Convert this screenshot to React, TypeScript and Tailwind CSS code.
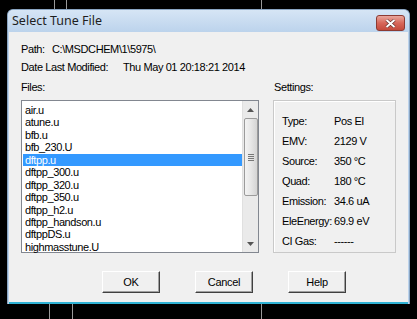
import React from 'react'

const files = [
  'air.u',
  'atune.u',
  'bfb.u',
  'bfb_230.U',
  'dftpp.u',
  'dftpp_300.u',
  'dftpp_320.u',
  'dftpp_350.u',
  'dftpp_h2.u',
  'dftpp_handson.u',
  'dftppDS.u',
  'highmasstune.U',
]

const settings: [string, string][] = [
  ['Type:', 'Pos EI'],
  ['EMV:', '2129 V'],
  ['Source:', '350 °C'],
  ['Quad:', '180 °C'],
  ['Emission:', '34.6 uA'],
  ['EleEnergy:', '69.9 eV'],
  ['CI Gas:', '------'],
]

function Button({ label }: { label: string }) {
  return (
    <button className="w-[58px] h-[22px] bg-[#f0f0f0] border border-t-white border-l-white border-r-[#404040] border-b-[#404040] shadow-[inset_-1px_-1px_0_#a0a0a0] text-[11px] tracking-[-0.3px] text-black">
      {label}
    </button>
  )
}

export default function App() {
  return (
    <div
      className="relative w-[417px] h-[319px] bg-black overflow-hidden pt-[9px] pl-[7px]"
      style={{ fontFamily: '"Liberation Sans", Arial, sans-serif' }}
    >
      {/* stray lines behind the window */}
      <div className="absolute left-[54px] top-0 w-px h-[10px] bg-[#9a9a9a]" />
      <div className="absolute left-[66px] top-0 w-px h-[10px] bg-[#9a9a9a]" />
      <div className="absolute left-[261px] top-0 w-px h-[10px] bg-[#9a9a9a]" />
      <div className="absolute left-[49px] bottom-0 w-px h-[16px] bg-[#9a9a9a]" />
      <div className="absolute left-[72px] bottom-0 w-px h-[16px] bg-[#9a9a9a]" />
      <div className="absolute left-[261px] bottom-0 w-px h-[16px] bg-[#9a9a9a]" />

      <div className="relative w-[403px] h-[295px] rounded-t-[6px] bg-[#bcd3ec] border border-[#8aa5c2] border-b-0 flex flex-col">
        {/* title bar */}
        <div className="h-[22px] flex items-center justify-between pl-[4px] pr-[4px] rounded-t-[5px] bg-gradient-to-b from-[#d6e5f5] to-[#bcd3ec]">
          <span
            className="text-[12.5px] text-[#1e1e1e] mt-[1px]"
            style={{ fontFamily: '"Noto Sans", "Open Sans", sans-serif' }}
          >
            Select Tune File
          </span>
          <div className="w-[29px] h-[16px] mt-[4px] rounded-[3px] border border-[#8c3a32] bg-gradient-to-b from-[#e8a69c] via-[#d7675a] to-[#c44a3c] flex items-center justify-center">
            <svg width="11" height="9" viewBox="0 0 11 9">
              <path d="M1.5 1 L9.5 8 M9.5 1 L1.5 8" stroke="#5a2a26" strokeWidth="3.2" />
              <path d="M1.5 1 L9.5 8 M9.5 1 L1.5 8" stroke="#ffffff" strokeWidth="2" />
            </svg>
          </div>
        </div>

        {/* client area */}
        <div className="flex-1 mx-[1px] bg-[#f0f0f0] border-b-2 border-[#2fb2d4] pl-[12px] text-[11px] tracking-[-0.4px] text-black">
          <div className="h-[18px] mt-[8px] flex items-center">
            <span className="w-[31px]">Path:</span>
            <span>C:\MSDCHEM\1\5975\</span>
          </div>
          <div className="h-[18px] flex items-center">
            <span className="w-[102px]">Date Last Modified:</span>
            <span>Thu May 01 20:18:21 2014</span>
          </div>

          <div className="flex gap-[14px] mt-[2px]">
            {/* files */}
            <div className="w-[238px]">
              <div className="h-[18px] flex items-center">Files:</div>
              <div className="mt-[4px] h-[153px] bg-white border border-[#828790] flex">
                <div className="flex-1 pt-[3px] pl-[1px]">
                  {files.map((f) => (
                    <div
                      key={f}
                      className={
                        f === 'dftpp.u'
                          ? 'h-[12.45px] leading-[12.45px] pl-[2px] bg-[#3399ff] text-white'
                          : 'h-[12.45px] leading-[12.45px] pl-[2px]'
                      }
                    >
                      {f}
                    </div>
                  ))}
                </div>
                {/* scrollbar */}
                <div className="w-[16px] bg-[#eaeaea] border-l border-[#e0e0e0] flex flex-col items-center">
                  <div className="h-[17px] flex items-center justify-center">
                    <svg width="7" height="4" viewBox="0 0 7 4">
                      <path d="M0 4 L3.5 0 L7 4 Z" fill="#555" />
                    </svg>
                  </div>
                  <div className="w-[14px] h-[78px] rounded-[2px] border border-[#9b9b9b] bg-gradient-to-r from-[#f3f3f3] via-[#e6e6e6] to-[#d4d4d4] flex items-center justify-center">
                    <div className="flex flex-col gap-[1px]">
                      <div className="w-[6px] h-px bg-[#777]" />
                      <div className="w-[6px] h-px bg-[#777]" />
                      <div className="w-[6px] h-px bg-[#777]" />
                      <div className="w-[6px] h-px bg-[#777]" />
                    </div>
                  </div>
                  <div className="flex-1" />
                  <div className="h-[17px] flex items-center justify-center">
                    <svg width="7" height="4" viewBox="0 0 7 4">
                      <path d="M0 0 L3.5 4 L7 0 Z" fill="#555" />
                    </svg>
                  </div>
                </div>
              </div>
            </div>

            {/* settings */}
            <div className="w-[123px]">
              <div className="h-[18px] flex items-center pl-[1px]">Settings:</div>
              <div className="mt-[4px] h-[153px] border border-[#c9c9c9] shadow-[inset_1px_1px_0_#ffffff] pt-[10px] pl-[8px]">
                {settings.map(([k, v]) => (
                  <div key={k} className="h-[20px] flex items-center">
                    <span className="w-[52px]">{k}</span>
                    <span>{v}</span>
                  </div>
                ))}
              </div>
            </div>
          </div>

          <div className="flex gap-[35px] mt-[18px] ml-[81px]">
            <Button label="OK" />
            <Button label="Cancel" />
            <Button label="Help" />
          </div>
        </div>
      </div>
    </div>
  )
}
